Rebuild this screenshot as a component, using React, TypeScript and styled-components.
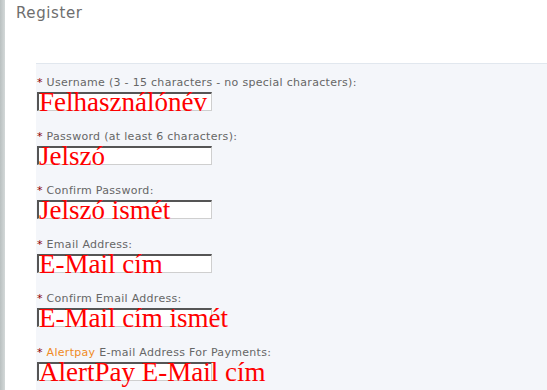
import styled, { createGlobalStyle } from "styled-components";

const fields = [
  { id: 1, label: "Username (3 - 15 characters - no special characters):", value: "Felhasználónév" },
  { id: 2, label: "Password (at least 6 characters):", value: "Jelszó" },
  { id: 3, label: "Confirm Password:", value: "Jelszó ismét" },
  { id: 4, label: "Email Address:", value: "E-Mail cím" },
  { id: 5, label: "Confirm Email Address:", value: "E-Mail cím ismét" },
  { id: 6, label: "E-mail Address For Payments:", value: "AlertPay E-Mail cím", brand: "Alertpay" },
];

const GlobalStyle = createGlobalStyle`
  html, body {
    margin: 0;
    padding: 0;
    background: #ffffff;
    overflow: hidden;
  }
`;

const App = () => {
  return (
    <Page>
      <GlobalStyle />
      <SideBar />
      <Main>
        <Title>Register</Title>
        <FormPanel>
          {fields.map((f) => (
            <Field key={f.id}>
              <Label>
                <Star>*</Star>{" "}
                {f.brand && <Brand>{f.brand} </Brand>}
                {f.label}
              </Label>
              <InputBox>
                <Value>{f.value}</Value>
              </InputBox>
            </Field>
          ))}
        </FormPanel>
      </Main>
    </Page>
  );
};

export default App;

const Page = styled.div`
  display: flex;
  width: 547px;
  height: 390px;
  overflow: hidden;
`;

const SideBar = styled.div`
  width: 5px;
  flex-shrink: 0;
  background: linear-gradient(to right, #b9c0c0, #d3d8d8);
`;

const Main = styled.div`
  flex: 1;
  display: flex;
  flex-direction: column;
  padding-left: 11px;
`;

const Title = styled.div`
  font-family: "DejaVu Sans", Verdana, sans-serif;
  font-size: 15px;
  letter-spacing: 0.6px;
  color: #6e6e6e;
  line-height: 18px;
  padding-top: 4px;
`;

const FormPanel = styled.div`
  flex: 1;
  margin-top: 41px;
  margin-left: 20px;
  border-top: 1px solid #e1e7ee;
  background: #f4f6fa;
  padding: 12px 0 0 1px;
  display: flex;
  flex-direction: column;
  gap: 19px;
`;

const Field = styled.div`
  display: flex;
  flex-direction: column;
`;

const Label = styled.div`
  font-family: "DejaVu Sans", Verdana, sans-serif;
  font-size: 11px;
  letter-spacing: 0.3px;
  line-height: 13px;
  color: #666666;
  height: 16px;
  white-space: nowrap;
`;

const Star = styled.span`
  color: #8b0000;
`;

const Brand = styled.span`
  color: #f08a24;
`;

const InputBox = styled.div`
  width: 172px;
  height: 16px;
  background: #ffffff;
  border-top: 2px solid #555555;
  border-left: 2px solid #555555;
  border-bottom: 1px solid #cfcfcf;
  border-right: 1px solid #cfcfcf;
  overflow: visible;
`;

const Value = styled.div`
  font-family: "Liberation Serif", "Times New Roman", serif;
  font-size: 27px;
  line-height: 20px;
  color: #ff0000;
  white-space: nowrap;
  margin-top: -2px;
`;
